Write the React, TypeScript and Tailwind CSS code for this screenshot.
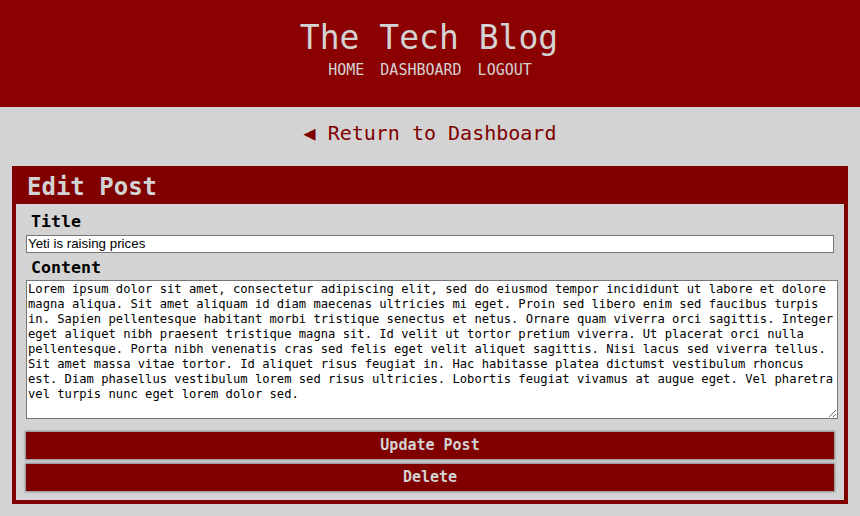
import React from "react";

const mono = { fontFamily: '"DejaVu Sans Mono", "Liberation Mono", monospace' };

const lorem =
  "Lorem ipsum dolor sit amet, consectetur adipiscing elit, sed do eiusmod tempor incididunt ut labore et dolore magna aliqua. Sit amet aliquam id diam maecenas ultricies mi eget. Proin sed libero enim sed faucibus turpis in. Sapien pellentesque habitant morbi tristique senectus et netus. Ornare quam viverra orci sagittis. Integer eget aliquet nibh praesent tristique magna sit. Id velit ut tortor pretium viverra. Ut placerat orci nulla pellentesque. Porta nibh venenatis cras sed felis eget velit aliquet sagittis. Nisi lacus sed viverra tellus. Sit amet massa vitae tortor. Id aliquet risus feugiat in. Hac habitasse platea dictumst vestibulum rhoncus est. Diam phasellus vestibulum lorem sed risus ultricies. Lobortis feugiat vivamus at augue eget. Vel pharetra vel turpis nunc eget lorem dolor sed.";

export default function App() {
  return (
    <div className="w-[860px] h-[516px] bg-[#d3d3d3] overflow-hidden" style={mono}>
      <header className="h-[107px] bg-[#8b0000] flex flex-col items-center pt-[18px]">
        <h1 className="text-[33px] leading-[40px] text-[#d3d3d3] ml-[-2px]">The Tech Blog</h1>
        <nav className="flex gap-[16px] text-[15px] leading-[20px] text-[#d3d3d3] mt-[2px]">
          <a>HOME</a>
          <a>DASHBOARD</a>
          <a>LOGOUT</a>
        </nav>
      </header>
      <div className="flex justify-center pt-[12px] h-[59px]">
        <a className="text-[20px] leading-[28px] text-[#800000]">◀ Return to Dashboard</a>
      </div>
      <section className="mx-[12px] border-[4px] border-[#800000] bg-[#d3d3d3]">
        <div className="h-[34px] bg-[#800000] pl-[11px] flex items-center">
          <h2 className="text-[24px] leading-[30px] font-bold text-[#d3d3d3]">Edit Post</h2>
        </div>
        <div className="pl-[10px] pt-[7px] pb-[9px]">
          <label className="block pl-[5px] text-[16.6px] leading-[22px] font-bold text-black">Title</label>
          <input
            className="block mt-[2px] w-[808px] h-[18px] bg-white border border-[#767676] px-[1px] text-[13.33px] text-black outline-none"
            style={{ fontFamily: '"Liberation Sans", Arial, sans-serif' }}
            defaultValue="Yeti is raising prices"
          />
          <label className="block mt-[4px] pl-[5px] text-[16.6px] leading-[22px] font-bold text-black">Content</label>
          <textarea
            className="block mt-[1px] w-[812px] h-[139px] bg-white border border-[#767676] px-[1px] py-[1px] text-[12.16px] leading-[15px] text-black outline-none"
            style={mono}
            defaultValue={lorem}
          />
          <button className="block mt-[13px] w-[808px] h-[27px] bg-[#800000] text-[#d3d3d3] font-bold text-[15px] shadow-[0_0_2px_1px_#888]">
            Update Post
          </button>
          <button className="block mt-[5px] w-[808px] h-[27px] bg-[#800000] text-[#d3d3d3] font-bold text-[15px] shadow-[0_0_2px_1px_#888]">
            Delete
          </button>
        </div>
      </section>
    </div>
  );
}
